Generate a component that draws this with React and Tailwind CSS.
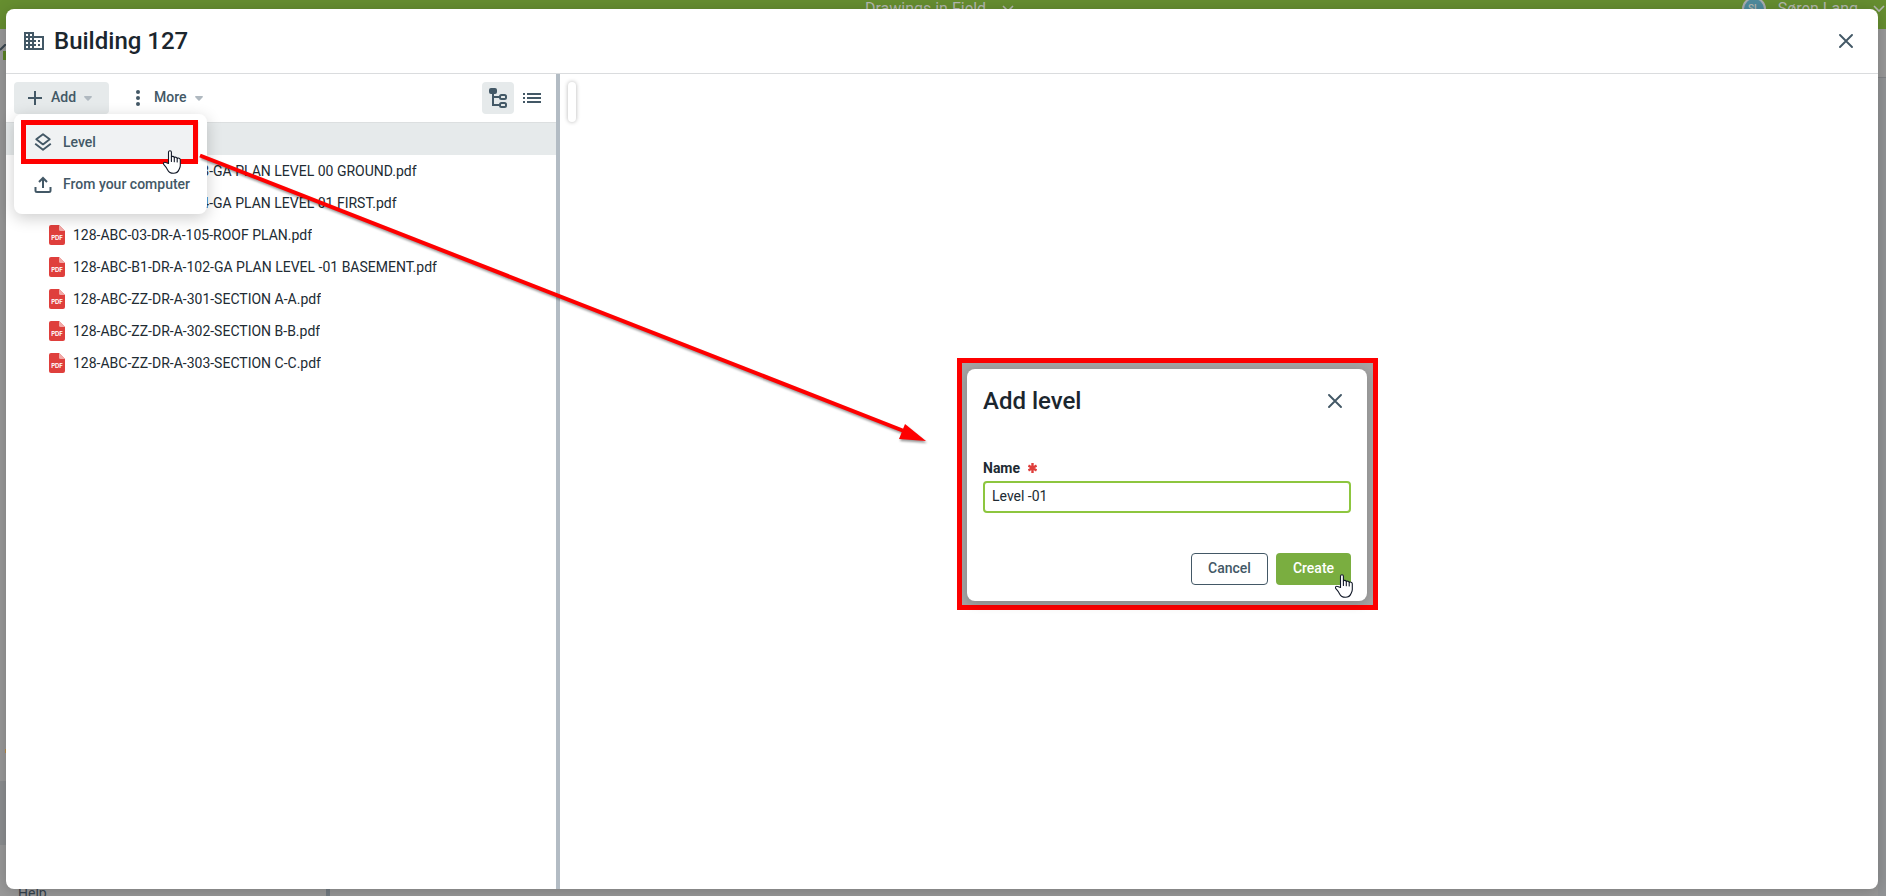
import { useState } from "react";
import { MdDomain } from "react-icons/md";

const files = [
  "128-ABC-00-DR-A-103-GA PLAN LEVEL 00 GROUND.pdf",
  "128-ABC-01-DR-A-104-GA PLAN LEVEL 01 FIRST.pdf",
  "128-ABC-03-DR-A-105-ROOF PLAN.pdf",
  "128-ABC-B1-DR-A-102-GA PLAN LEVEL -01 BASEMENT.pdf",
  "128-ABC-ZZ-DR-A-301-SECTION A-A.pdf",
  "128-ABC-ZZ-DR-A-302-SECTION B-B.pdf",
  "128-ABC-ZZ-DR-A-303-SECTION C-C.pdf",
];

const CloseIcon = () => (
  <svg width="14" height="14" viewBox="0 0 14 14" fill="none" stroke="currentColor" strokeWidth="1.9" strokeLinecap="round">
    <path d="M1 1l12 12M13 1L1 13" />
  </svg>
);

const PlusIcon = () => (
  <svg width="14" height="14" viewBox="0 0 14 14" fill="none" stroke="currentColor" strokeWidth="2">
    <path d="M7 0v14M0 7h14" />
  </svg>
);

const DotsIcon = () => (
  <svg width="4" height="16" viewBox="0 0 4 16" fill="currentColor">
    <circle cx="2" cy="2" r="2" />
    <circle cx="2" cy="8" r="2" />
    <circle cx="2" cy="14" r="2" />
  </svg>
);

const CaretIcon = () => (
  <svg width="8" height="5" viewBox="0 0 8 5" fill="#b0b9c0">
    <path d="M.8 0h6.4c.7 0 1 .8.5 1.3L4.6 4.6a.9.9 0 0 1-1.2 0L.3 1.3C-.2.8.1 0 .8 0z" />
  </svg>
);

const ChevronDown = () => (
  <svg width="12" height="8" viewBox="0 0 12 8" fill="none" stroke="currentColor" strokeWidth="1.6">
    <path d="M1 1l5 5 5-5" />
  </svg>
);

const TreeIcon = () => (
  <svg width="18" height="20" viewBox="0 0 18 20" fill="none" stroke="currentColor" strokeWidth="2">
    <rect x="0" y="0" width="8" height="6" rx="2" fill="currentColor" stroke="none" />
    <path d="M4 5v12h6M4 9h6" />
    <rect x="11" y="7" width="6" height="4" rx="1.5" />
    <rect x="11" y="15" width="6" height="4" rx="1.5" />
  </svg>
);

const ListIcon = () => (
  <svg width="18" height="10" viewBox="0 0 18 10" fill="currentColor">
    <path d="M0 0h2v2H0zM4 0h14v2H4zM0 4h2v2H0zM4 4h14v2H4zM0 8h2v2H0zM4 8h14v2H4z" />
  </svg>
);

const LayersIcon = () => (
  <svg width="18" height="18" viewBox="0 0 18 18" fill="none" stroke="currentColor" strokeWidth="1.9" strokeLinejoin="round">
    <path d="M9 1.200l6.700 5.100L9 11.400 2.300 6.300z" />
    <path d="M1.200 10.800L9 16.700l7.800-5.900" />
  </svg>
);

const UploadIcon = () => (
  <svg width="18" height="18" viewBox="0 0 18 18" fill="none" stroke="currentColor" strokeWidth="2">
    <path d="M9 13V3M5 7l4-4 4 4" />
    <path d="M1.500 12v3.500c0 .8.500 1.500 1.500 1.500h12c1 0 1.500-.7 1.500-1.500V12" />
  </svg>
);

const PdfIcon = () => (
  <svg width="16" height="20" viewBox="0 0 16 20" className="shrink-0" aria-hidden="true">
    <path d="M2 0h8l6 6v12a2 2 0 0 1-2 2H2a2 2 0 0 1-2-2V2a2 2 0 0 1 2-2z" fill="#df3f3c" />
    <path d="M10 0l6 6h-4.500A1.500 1.500 0 0 1 10 4.500z" fill="#f2a9a7" />
    <text x="8" y="15" textAnchor="middle" fontFamily="Inter, sans-serif" fontSize="6" fontWeight="700" fill="#fff">
      PDF
    </text>
  </svg>
);

const HandCursor = () => (
  <svg width="18" height="24" viewBox="0 0 18 24" fill="#fff" stroke="#111827" strokeWidth="1.1" strokeLinejoin="round" strokeLinecap="round">
    <path d="M5.500 13.500V2.200C5.500.3 8.400.3 8.400 2.200V7c.5-1 2.700-.8 2.900.7.600-.9 2.700-.6 2.900.8.800-.8 3.100-.5 3.100 1.300v5.700c0 2-.8 3-1.400 4.300-.8 2.200-2.700 3.500-5.500 3.500-3 0-4.600-1-5.900-3.600-.9-1.900-2.300-3.600-3.800-5.300-.8-1.300.7-2.700 2.100-1.800z" />
    <path d="M8.400 7v4.500M11.300 7.700v4M14.200 8.500v3.500" fill="none" />
  </svg>
);

// Dimmed application that sits behind the dialog
const PageBehind = () => (
  <div className="flex h-full flex-col bg-[#999]">
    <header className="flex h-[29px] items-center bg-[#668e30] pb-3 pr-px text-base leading-4 text-[#b4b8b0]">
      <div className="flex-1" />
      <div className="flex items-center gap-4 pr-1.5">
        <span>Drawings in Field</span>
        <ChevronDown />
      </div>
      <div className="flex flex-1 items-center justify-end">
        <span className="mr-3 flex size-6 shrink-0 items-center justify-center rounded-full border-2 border-[#a9adb0] bg-[#4f8b9d] text-[10px] font-medium">
          SL
        </span>
        <span className="mr-[15px]">Søren Lang</span>
        <ChevronDown />
      </div>
    </header>
    <div className="flex flex-1 justify-between">
      <aside className="flex w-[330px] flex-col border-r-4 border-[#737b82]">
        <svg width="6" height="16" viewBox="0 0 6 16" className="mt-[15px]" aria-hidden="true">
          <path d="M0 6l6-6" stroke="#3a4650" strokeWidth="2" />
          <path d="M3 7h3v9H3z" fill="#5c8326" />
        </svg>
        <div className="flex-1" />
        <div className="mb-7 ml-[5px] h-1 w-1 bg-[#b98a45]" />
        <div className="mb-10 h-16 bg-[#8c8e90]" />
        <a href="#help" className="h-[11px] pl-[18px] text-sm leading-4 text-[#34424d]">
          Help
        </a>
      </aside>
      <div className="w-2 pt-12">
        <div className="h-full border-t border-[#828487] bg-[#929496]" />
      </div>
    </div>
  </div>
);

const AddMenu = () => (
  <div className="absolute left-0 top-full z-10 flex w-[193px] flex-col gap-0.5 rounded-lg bg-white px-2 pb-2.5 pt-2 shadow-[0_4px_16px_rgba(0,0,0,0.2)]">
    <button type="button" className="relative flex h-10 items-center gap-[11px] bg-[#f0f2f3] pl-3">
      <LayersIcon />
      Level
      <span className="absolute -inset-y-0.5 -left-px right-px border-5 border-[#fe0000]" />
      <span className="absolute right-[18px] top-7">
        <HandCursor />
      </span>
    </button>
    <button type="button" className="flex h-10 items-center gap-[11px] whitespace-nowrap pl-3">
      <UploadIcon />
      From your computer
    </button>
  </div>
);

const FilePanel = () => (
  <section className="flex w-[554px] shrink-0 flex-col border-r-4 border-[#b3bcc4]">
    <div className="flex h-12 items-center px-2 text-sm font-medium text-[#435866]">
      <div className="relative mr-4">
        <button type="button" className="flex h-8 w-[95px] items-center rounded bg-[#e6eaeb] pl-3.5">
          <PlusIcon />
          <span className="mx-2 pb-0.5 pl-px">Add</span>
          <CaretIcon />
        </button>
        <AddMenu />
      </div>
      <button type="button" className="flex h-8 items-center rounded pl-[11px]">
        <DotsIcon />
        <span className="ml-3.5 mr-2 pb-0.5">More</span>
        <CaretIcon />
      </button>
      <div className="ml-auto flex gap-0.5">
        <button type="button" aria-label="Tree view" className="flex size-8 items-center justify-center rounded bg-[#e6eaeb]">
          <TreeIcon />
        </button>
        <button type="button" aria-label="List view" className="flex size-8 items-center justify-center rounded">
          <ListIcon />
        </button>
      </div>
    </div>
    <div className="h-[33px] border-t border-[#dcdfe0] bg-[#e6eaeb]" />
    <ul>
      {files.map((name) => (
        <li key={name} className="flex h-8 items-center gap-2 pl-[43px] text-sm text-[#212b33]">
          <PdfIcon />
          <span className="truncate">{name}</span>
        </li>
      ))}
    </ul>
  </section>
);

const AddLevelDialog = () => {
  const [name, setName] = useState("Level -01");

  return (
    <div className="absolute left-[397px] top-[284px] w-[421px] border-5 border-[#fe0000] bg-[#a5a5a5] pb-1 pl-[5px] pr-1.5 pt-1.5">
      <form
        className="relative rounded-lg bg-white p-4 text-sm shadow-[0_2px_12px_rgba(0,0,0,0.2)]"
        onSubmit={(event) => event.preventDefault()}
      >
        <div className="flex h-8 items-center justify-between pr-[9px]">
          <h2 className="text-2xl font-medium text-[#1b262e]">Add level</h2>
          <button type="button" aria-label="Close" className="text-[#435866]">
            <CloseIcon />
          </button>
        </div>
        <label htmlFor="level-name" className="mt-10 flex h-6 items-center gap-2 pb-0.5 font-bold text-[#212b33]">
          Name
          <svg width="9" height="10" viewBox="0 0 9 10" stroke="#df3f3c" strokeWidth="2.4" aria-hidden="true">
            <path d="M4.500 0v10M.4 2.600l8.200 4.800M8.600 2.600L.4 7.400" />
          </svg>
        </label>
        <input
          id="level-name"
          type="text"
          required
          value={name}
          onChange={(event) => setName(event.target.value)}
          className="block h-8 w-full rounded border-2 border-[#8dc63f] px-[7px] pb-0.5 text-[#212b33] outline-none"
        />
        <div className="mt-10 flex justify-end gap-2 font-medium">
          <button type="button" className="h-8 w-[77px] rounded border border-[#435866] pb-0.5 text-[#435866]">
            Cancel
          </button>
          <button type="submit" className="h-8 w-[75px] rounded bg-[#7aae40] pb-0.5 text-white">
            Create
          </button>
        </div>
        <span className="absolute bottom-[3px] right-3.5">
          <HandCursor />
        </span>
      </form>
    </div>
  );
};

const App = () => (
  <div className="relative h-screen overflow-hidden font-['Roboto','Liberation_Sans',sans-serif]">
    <PageBehind />
    <main className="absolute inset-0 flex pb-[7px] pl-1.5 pr-2 pt-[9px]">
      <div className="flex flex-1 flex-col rounded-lg bg-white shadow-[0_2px_16px_rgba(0,0,0,0.2)]">
        <header className="flex h-[65px] items-center border-b border-[#dadcde] pl-4 pr-[25px] text-[#435866]">
          <MdDomain size={24} />
          <h1 className="ml-2 text-2xl font-medium text-[#1b262e]">Building 127</h1>
          <button type="button" aria-label="Close" className="ml-auto">
            <CloseIcon />
          </button>
        </header>
        <div className="flex flex-1">
          <FilePanel />
          <section className="relative flex-1 p-2">
            <div className="h-10 w-2 rounded shadow-[0_0_4px_rgba(0,0,0,0.3)]" />
            <AddLevelDialog />
          </section>
        </div>
      </div>
    </main>
    <svg
      width="730"
      height="296"
      viewBox="0 0 730 296"
      className="pointer-events-none absolute left-[199px] top-[152px] z-20 drop-shadow-[1px_2px_1px_rgba(0,0,0,0.4)]"
      aria-hidden="true"
    >
      <path d="M1 3.500L710 281" stroke="#fe0000" strokeWidth="4" />
      <path d="M727 289l-21-17-6 15z" fill="#fe0000" />
    </svg>
  </div>
);

export default App;
